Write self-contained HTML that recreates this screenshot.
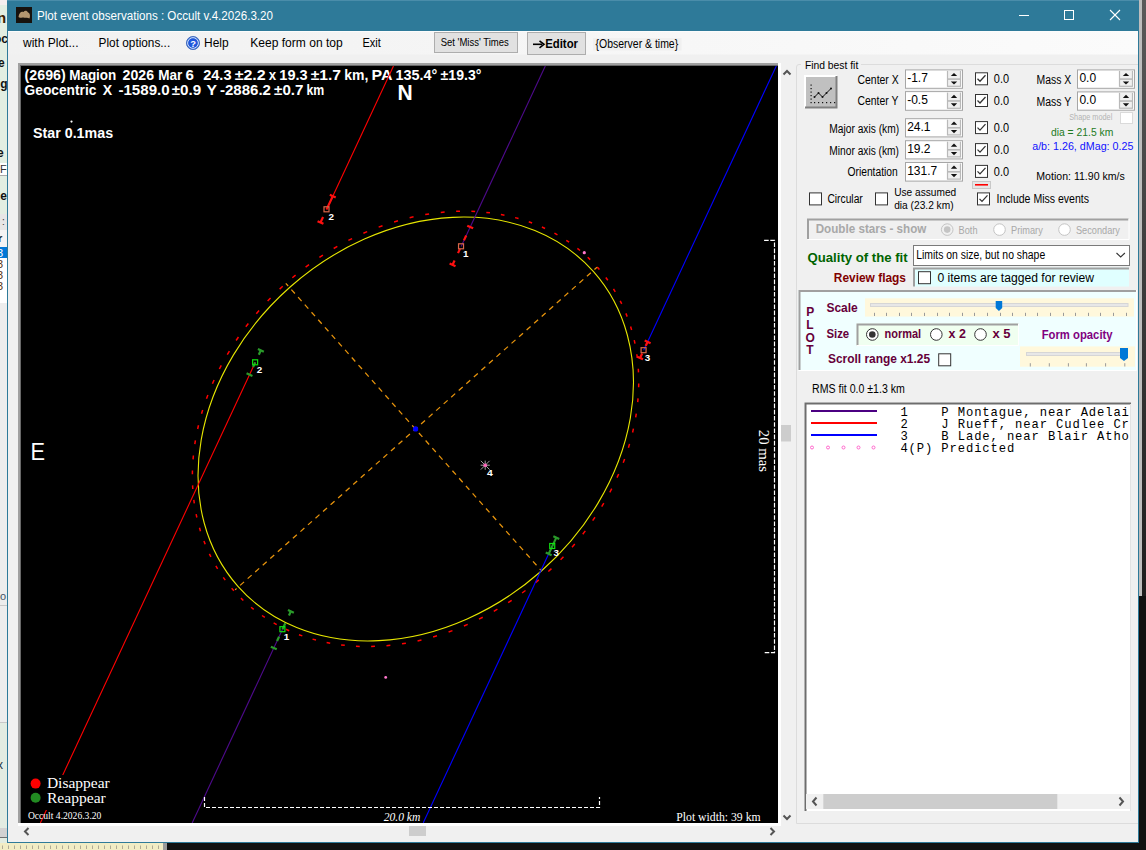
<!DOCTYPE html>
<html><head><meta charset="utf-8"><title>Plot event observations</title>
<style>html,body{margin:0;padding:0;width:1146px;height:850px;overflow:hidden;background:#111}svg{display:block}text{white-space:pre}</style></head>
<body><svg width="1146" height="850" viewBox="0 0 1146 850" font-family="Liberation Sans" xml:space="preserve">
<rect x="0" y="0" width="1146" height="850" fill="#111"/>
<defs><linearGradient id="rg" x1="0" y1="0" x2="0" y2="1"><stop offset="0" stop-color="#5a5a5a"/><stop offset="0.5" stop-color="#3a3a3a"/><stop offset="1" stop-color="#1e1e1e"/></linearGradient><linearGradient id="mg" x1="0" y1="0" x2="1" y2="0"><stop offset="0" stop-color="#f1f1f1"/><stop offset="1" stop-color="#fbfbfb"/></linearGradient><clipPath id="pc"><rect x="21" y="66" width="757" height="757"/></clipPath><clipPath id="lc"><rect x="806" y="404" width="324" height="390"/></clipPath></defs>
<rect x="1139" y="0" width="7" height="596" fill="url(#rg)"/>
<rect x="1139" y="0" width="3" height="596" fill="#bdbdbd"/>
<rect x="0" y="0" width="8" height="843" fill="#e2eee2"/>
<rect x="0" y="0" width="8" height="5" fill="#f4eeee"/>
<rect x="0" y="163" width="8" height="12" fill="#fff"/>
<line x1="0.00" y1="175.50" x2="8.00" y2="175.50" stroke="#aaa" stroke-width="1"/>
<rect x="0" y="214" width="8" height="16" fill="#e6e6e6"/>
<rect x="0" y="230" width="8" height="17" fill="#f4f4f4"/>
<rect x="0" y="247" width="8" height="11" fill="#0078d7"/>
<rect x="0" y="258" width="8" height="45" fill="#fff"/>
<rect x="0" y="303" width="8" height="540" fill="#ededed"/>
<line x1="0.00" y1="605.50" x2="8.00" y2="605.50" stroke="#c8c8c8" stroke-width="1"/>
<line x1="0.00" y1="722.50" x2="8.00" y2="722.50" stroke="#c8c8c8" stroke-width="1"/>
<rect x="0" y="723" width="8" height="120" fill="#e2ece2"/>
<rect x="0" y="828" width="8" height="9" fill="#d2d2d2"/>
<line x1="0.00" y1="837.50" x2="8.00" y2="837.50" stroke="#707070" stroke-width="1"/>
<clipPath id="lsc"><rect x="0" y="0" width="7" height="843"/></clipPath><g clip-path="url(#lsc)">
<text x="-3.0" y="23.0" font-size="15" fill="#3a2000" font-weight="bold" font-family="Liberation Sans" font-style="normal">n</text>
<text x="-6.0" y="43.0" font-size="12" fill="#111" font-weight="bold" font-family="Liberation Sans" font-style="normal">oc</text>
<text x="-2.0" y="67.0" font-size="12" fill="#111" font-weight="bold" font-family="Liberation Sans" font-style="normal">e</text>
<text x="-3.0" y="88.0" font-size="12" fill="#111" font-weight="bold" font-family="Liberation Sans" font-style="normal">ig</text>
<text x="-7.0" y="157.0" font-size="12" fill="#111" font-weight="bold" font-family="Liberation Sans" font-style="normal">te</text>
<text x="0.0" y="173.0" font-size="11" fill="#333" font-weight="normal" font-family="Liberation Sans" font-style="normal">Fl</text>
<text x="-7.0" y="200.0" font-size="12" fill="#111" font-weight="bold" font-family="Liberation Sans" font-style="normal">de</text>
<text x="2.0" y="225.0" font-size="10" fill="#333" font-weight="normal" font-family="Liberation Sans" font-style="normal">:</text>
<text x="-2.0" y="242.0" font-size="11" fill="#111" font-weight="bold" font-family="Liberation Sans" font-style="normal">r</text>
<text x="-3.0" y="257.0" font-size="11" fill="#fff" font-weight="normal" font-family="Liberation Sans" font-style="normal">3</text>
<text x="-3.0" y="268.0" font-size="11" fill="#553311" font-weight="normal" font-family="Liberation Sans" font-style="normal">3</text>
<text x="-3.0" y="279.0" font-size="11" fill="#553311" font-weight="normal" font-family="Liberation Sans" font-style="normal">3</text>
<text x="-3.0" y="290.0" font-size="11" fill="#553311" font-weight="normal" font-family="Liberation Sans" font-style="normal">3</text>
<text x="-6.0" y="600.0" font-size="11" fill="#445566" font-weight="normal" font-family="Liberation Sans" font-style="normal">oo</text>
<text x="-3.0" y="769.0" font-size="12" fill="#223344" font-weight="normal" font-family="Liberation Sans" font-style="normal">x</text>
</g>
<rect x="0" y="843" width="165" height="7" fill="#f1ecc4"/>
<rect x="163" y="843" width="4" height="7" fill="#9a9a9a"/>
<line x1="2.50" y1="845.50" x2="2.50" y2="849.00" stroke="#a8a390" stroke-width="0.9"/>
<line x1="8.50" y1="845.50" x2="8.50" y2="849.00" stroke="#a8a390" stroke-width="0.9"/>
<line x1="14.50" y1="845.50" x2="14.50" y2="849.00" stroke="#a8a390" stroke-width="0.9"/>
<line x1="20.50" y1="845.50" x2="20.50" y2="849.00" stroke="#a8a390" stroke-width="0.9"/>
<line x1="26.50" y1="845.50" x2="26.50" y2="849.00" stroke="#a8a390" stroke-width="0.9"/>
<line x1="32.50" y1="845.50" x2="32.50" y2="849.00" stroke="#a8a390" stroke-width="0.9"/>
<line x1="38.50" y1="845.50" x2="38.50" y2="849.00" stroke="#a8a390" stroke-width="0.9"/>
<line x1="44.50" y1="845.50" x2="44.50" y2="849.00" stroke="#a8a390" stroke-width="0.9"/>
<line x1="50.50" y1="845.50" x2="50.50" y2="849.00" stroke="#a8a390" stroke-width="0.9"/>
<line x1="56.50" y1="845.50" x2="56.50" y2="849.00" stroke="#a8a390" stroke-width="0.9"/>
<line x1="62.50" y1="845.50" x2="62.50" y2="849.00" stroke="#a8a390" stroke-width="0.9"/>
<line x1="68.50" y1="845.50" x2="68.50" y2="849.00" stroke="#a8a390" stroke-width="0.9"/>
<line x1="74.50" y1="845.50" x2="74.50" y2="849.00" stroke="#a8a390" stroke-width="0.9"/>
<line x1="80.50" y1="845.50" x2="80.50" y2="849.00" stroke="#a8a390" stroke-width="0.9"/>
<line x1="86.50" y1="845.50" x2="86.50" y2="849.00" stroke="#a8a390" stroke-width="0.9"/>
<line x1="92.50" y1="845.50" x2="92.50" y2="849.00" stroke="#a8a390" stroke-width="0.9"/>
<line x1="98.50" y1="845.50" x2="98.50" y2="849.00" stroke="#a8a390" stroke-width="0.9"/>
<line x1="104.50" y1="845.50" x2="104.50" y2="849.00" stroke="#a8a390" stroke-width="0.9"/>
<line x1="110.50" y1="845.50" x2="110.50" y2="849.00" stroke="#a8a390" stroke-width="0.9"/>
<line x1="116.50" y1="845.50" x2="116.50" y2="849.00" stroke="#a8a390" stroke-width="0.9"/>
<line x1="122.50" y1="845.50" x2="122.50" y2="849.00" stroke="#a8a390" stroke-width="0.9"/>
<line x1="128.50" y1="845.50" x2="128.50" y2="849.00" stroke="#a8a390" stroke-width="0.9"/>
<line x1="134.50" y1="845.50" x2="134.50" y2="849.00" stroke="#a8a390" stroke-width="0.9"/>
<line x1="140.50" y1="845.50" x2="140.50" y2="849.00" stroke="#a8a390" stroke-width="0.9"/>
<line x1="146.50" y1="845.50" x2="146.50" y2="849.00" stroke="#a8a390" stroke-width="0.9"/>
<line x1="152.50" y1="845.50" x2="152.50" y2="849.00" stroke="#a8a390" stroke-width="0.9"/>
<line x1="158.50" y1="845.50" x2="158.50" y2="849.00" stroke="#a8a390" stroke-width="0.9"/>
<rect x="7" y="0" width="1132" height="843" fill="#2e7a99"/>
<rect x="8" y="31" width="1130" height="811" fill="#f0f0f0"/>
<rect x="8" y="31" width="1130" height="23.5" fill="url(#mg)"/>
<rect x="8" y="31" width="1130" height="1" fill="#fcfcfc"/>
<rect x="7" y="0" width="1132" height="1" fill="#4a8daa"/>
<rect x="16" y="7" width="16" height="16" fill="#17120d"/>
<path d="M18.5 17 C19 13 21 11 23.5 12 C25 10 27 10.5 28 12.5 C30 13 30.5 16 29.5 18.5 C27 17 25.5 18.5 23.5 17.5 C21.5 17 20 18.5 18.5 17Z" fill="#b39670"/>
<text x="37.0" y="20.0" font-size="12" fill="#fff" font-weight="normal" font-family="Liberation Sans" font-style="normal" textLength="236.0" lengthAdjust="spacingAndGlyphs">Plot event observations : Occult v.4.2026.3.20</text>
<line x1="1019.00" y1="15.50" x2="1029.00" y2="15.50" stroke="#fff" stroke-width="1"/>
<rect x="1064.5" y="10.5" width="9" height="9" fill="none" stroke="#fff" stroke-width="1"/>
<line x1="1110.00" y1="10.00" x2="1120.00" y2="20.00" stroke="#fff" stroke-width="1.1"/>
<line x1="1120.00" y1="10.00" x2="1110.00" y2="20.00" stroke="#fff" stroke-width="1.1"/>
<text x="23.0" y="46.8" font-size="12" fill="#000" font-weight="normal" font-family="Liberation Sans" font-style="normal" textLength="55.5" lengthAdjust="spacingAndGlyphs">with Plot...</text>
<text x="98.6" y="46.8" font-size="12" fill="#000" font-weight="normal" font-family="Liberation Sans" font-style="normal" textLength="71.6" lengthAdjust="spacingAndGlyphs">Plot options...</text>
<circle cx="193" cy="43" r="6.6" fill="#3b6fd2" stroke="#3560b8" stroke-width="0.8"/><circle cx="193" cy="43" r="5.3" fill="none" stroke="#dbe8ff" stroke-width="1"/><circle cx="193" cy="43" r="4.6" fill="#1f56dc"/>
<text x="190.3" y="47.0" font-size="9.5" fill="#fff" font-weight="bold" font-family="Liberation Sans" font-style="normal" textLength="5.7" lengthAdjust="spacingAndGlyphs">?</text>
<text x="204.0" y="46.8" font-size="12" fill="#000" font-weight="normal" font-family="Liberation Sans" font-style="normal" textLength="24.6" lengthAdjust="spacingAndGlyphs">Help</text>
<text x="250.3" y="46.8" font-size="12" fill="#000" font-weight="normal" font-family="Liberation Sans" font-style="normal" textLength="92.4" lengthAdjust="spacingAndGlyphs">Keep form on top</text>
<text x="362.4" y="46.8" font-size="12" fill="#000" font-weight="normal" font-family="Liberation Sans" font-style="normal" textLength="18.4" lengthAdjust="spacingAndGlyphs">Exit</text>
<rect x="434.5" y="32.5" width="83" height="20" fill="#e1e1e1" stroke="#adadad" stroke-width="1"/>
<text x="440.7" y="46.3" font-size="10.3" fill="#000" font-weight="normal" font-family="Liberation Sans" font-style="normal" textLength="68.0" lengthAdjust="spacingAndGlyphs">Set 'Miss' Times</text>
<rect x="527.5" y="32.5" width="58" height="22" fill="#e1e1e1" stroke="#adadad" stroke-width="1"/>
<path d="M533 44.3 H542" stroke="#000" stroke-width="1.6"/><path d="M539.5 40.8 L544 44.3 L539.5 47.8" fill="none" stroke="#000" stroke-width="1.6"/>
<text x="545.2" y="48.1" font-size="12.5" fill="#000" font-weight="bold" font-family="Liberation Sans" font-style="normal" textLength="32.8" lengthAdjust="spacingAndGlyphs">Editor</text>
<rect x="593" y="38" width="88.6" height="12.5" fill="#f0f0f0"/>
<text x="595.6" y="48.1" font-size="12" fill="#000" font-weight="normal" font-family="Liberation Sans" font-style="normal" textLength="82.6" lengthAdjust="spacingAndGlyphs">{Observer &amp; time}</text>
<rect x="18" y="63" width="763" height="763" fill="#fff"/>
<rect x="18" y="63" width="760" height="2" fill="#a0a0a0"/>
<rect x="18" y="63" width="2" height="760" fill="#a0a0a0"/>
<rect x="20" y="65" width="758" height="1" fill="#696969"/>
<rect x="20" y="65" width="1" height="758" fill="#696969"/>
<rect x="21" y="66" width="757" height="757" fill="#000"/>
<rect x="781" y="63" width="15" height="763" fill="#f0f0f0"/>
<path d="M783.5 74.5 L787 71 L790.5 74.5" fill="none" stroke="#555" stroke-width="2"/>
<path d="M783.5 815.5 L787 819 L790.5 815.5" fill="none" stroke="#555" stroke-width="2"/>
<rect x="781" y="425" width="10" height="16.5" fill="#cdcdcd"/>
<path d="M28.5 828 L25 831.5 L28.5 835" fill="none" stroke="#555" stroke-width="2"/>
<path d="M770.5 828 L774 831.5 L770.5 835" fill="none" stroke="#555" stroke-width="2"/>
<rect x="409" y="826" width="17" height="10" fill="#cdcdcd"/>
<g clip-path="url(#pc)">
<text x="24.6" y="80.3" font-size="14" fill="#fff" font-weight="bold" font-family="Liberation Sans" font-style="normal" textLength="41.1" lengthAdjust="spacingAndGlyphs">(2696)</text>
<text x="69.2" y="80.3" font-size="14" fill="#fff" font-weight="bold" font-family="Liberation Sans" font-style="normal" textLength="47.1" lengthAdjust="spacingAndGlyphs">Magion</text>
<text x="122.6" y="80.3" font-size="14" fill="#fff" font-weight="bold" font-family="Liberation Sans" font-style="normal" textLength="31.4" lengthAdjust="spacingAndGlyphs">2026</text>
<text x="158.2" y="80.3" font-size="14" fill="#fff" font-weight="bold" font-family="Liberation Sans" font-style="normal" textLength="24.1" lengthAdjust="spacingAndGlyphs">Mar</text>
<text x="185.4" y="80.3" font-size="14" fill="#fff" font-weight="bold" font-family="Liberation Sans" font-style="normal" textLength="8.4" lengthAdjust="spacingAndGlyphs">6</text>
<text x="203.2" y="80.3" font-size="14" fill="#fff" font-weight="bold" font-family="Liberation Sans" font-style="normal" textLength="28.3" lengthAdjust="spacingAndGlyphs">24.3</text>
<text x="234.7" y="80.3" font-size="14" fill="#fff" font-weight="bold" font-family="Liberation Sans" font-style="normal" textLength="31.0" lengthAdjust="spacingAndGlyphs">±2.2</text>
<text x="268.8" y="80.3" font-size="14" fill="#fff" font-weight="bold" font-family="Liberation Sans" font-style="normal" textLength="7.4" lengthAdjust="spacingAndGlyphs">x</text>
<text x="279.3" y="80.3" font-size="14" fill="#fff" font-weight="bold" font-family="Liberation Sans" font-style="normal" textLength="28.3" lengthAdjust="spacingAndGlyphs">19.3</text>
<text x="310.7" y="80.3" font-size="14" fill="#fff" font-weight="bold" font-family="Liberation Sans" font-style="normal" textLength="30.4" lengthAdjust="spacingAndGlyphs">±1.7</text>
<text x="344.2" y="80.3" font-size="14" fill="#fff" font-weight="bold" font-family="Liberation Sans" font-style="normal" textLength="24.1" lengthAdjust="spacingAndGlyphs">km,</text>
<text x="371.5" y="80.3" font-size="14" fill="#fff" font-weight="bold" font-family="Liberation Sans" font-style="normal" textLength="20.9" lengthAdjust="spacingAndGlyphs">PA</text>
<text x="395.5" y="80.3" font-size="14" fill="#fff" font-weight="bold" font-family="Liberation Sans" font-style="normal" textLength="41.9" lengthAdjust="spacingAndGlyphs">135.4°</text>
<text x="440.6" y="80.3" font-size="14" fill="#fff" font-weight="bold" font-family="Liberation Sans" font-style="normal" textLength="40.8" lengthAdjust="spacingAndGlyphs">±19.3°</text>
<text x="24.6" y="95.4" font-size="14" fill="#fff" font-weight="bold" font-family="Liberation Sans" font-style="normal" textLength="71.8" lengthAdjust="spacingAndGlyphs">Geocentric</text>
<text x="102.7" y="95.4" font-size="14" fill="#fff" font-weight="bold" font-family="Liberation Sans" font-style="normal" textLength="9.4" lengthAdjust="spacingAndGlyphs">X</text>
<text x="118.4" y="95.4" font-size="14" fill="#fff" font-weight="bold" font-family="Liberation Sans" font-style="normal" textLength="51.3" lengthAdjust="spacingAndGlyphs">-1589.0</text>
<text x="171.8" y="95.4" font-size="14" fill="#fff" font-weight="bold" font-family="Liberation Sans" font-style="normal" textLength="29.4" lengthAdjust="spacingAndGlyphs">±0.9</text>
<text x="206.4" y="95.4" font-size="14" fill="#fff" font-weight="bold" font-family="Liberation Sans" font-style="normal" textLength="10.5" lengthAdjust="spacingAndGlyphs">Y</text>
<text x="220.0" y="95.4" font-size="14" fill="#fff" font-weight="bold" font-family="Liberation Sans" font-style="normal" textLength="50.9" lengthAdjust="spacingAndGlyphs">-2886.2</text>
<text x="274.1" y="95.4" font-size="14" fill="#fff" font-weight="bold" font-family="Liberation Sans" font-style="normal" textLength="29.3" lengthAdjust="spacingAndGlyphs">±0.7</text>
<text x="306.5" y="95.4" font-size="14" fill="#fff" font-weight="bold" font-family="Liberation Sans" font-style="normal" textLength="17.8" lengthAdjust="spacingAndGlyphs">km</text>
<text x="397.5" y="99.8" font-size="22" fill="#fff" font-weight="bold" font-family="Liberation Sans" font-style="normal" textLength="15.2" lengthAdjust="spacingAndGlyphs">N</text>
<text x="30.4" y="459.9" font-size="23" fill="#fff" font-weight="normal" font-family="Liberation Sans" font-style="normal" textLength="14.5" lengthAdjust="spacingAndGlyphs">E</text>
<text x="33.0" y="137.9" font-size="14" fill="#fff" font-weight="bold" font-family="Liberation Sans" font-style="normal" textLength="80.1" lengthAdjust="spacingAndGlyphs">Star 0.1mas</text>
<circle cx="71.5" cy="121.6" r="1.1" fill="#fff"/>
<path d="M233.89 590.71L231.66 588.15M225.29 580.17L223.28 577.41M217.62 568.88L215.85 565.95M210.91 556.92L209.38 553.83M205.19 544.33L203.92 541.09M200.50 531.18L199.49 527.81M196.86 517.53L196.12 514.05M194.29 503.45L193.81 499.87M192.79 489.00L192.59 485.34M192.38 474.27L192.44 470.54M193.05 459.31L193.39 455.54M194.81 444.20L195.42 440.41M197.65 429.02L198.52 425.22M201.54 413.83L202.68 410.05M206.48 398.72L207.88 394.97M212.44 383.76L214.08 380.05M219.39 369.02L221.27 365.38M227.29 354.57L229.41 351.01M236.11 340.48L238.45 337.02M245.80 326.82L248.36 323.48M256.32 313.66L259.08 310.45M267.62 301.06L270.56 298.00M279.64 289.08L282.75 286.19M292.32 277.78L295.58 275.07M305.60 267.22L309.00 264.70M319.41 257.45L322.94 255.13M333.69 248.51L337.33 246.41M348.38 240.45L352.10 238.57M363.39 233.31L367.18 231.67M378.65 227.12L382.50 225.72M394.10 221.91L397.98 220.77M409.64 217.71L413.54 216.82M425.22 214.54L429.11 213.91M440.75 212.42L444.62 212.05M456.16 211.35L459.98 211.25M471.37 211.34L475.13 211.50M486.31 212.39L489.99 212.81M500.90 214.49L504.48 215.18M515.08 217.64L518.55 218.59M528.77 221.81L532.11 223.02M541.91 227.00L545.10 228.45M554.43 233.17L557.46 234.86M566.28 240.29L569.13 242.22M577.39 248.33L580.05 250.48M587.72 257.25L590.17 259.62M597.21 267.01L599.44 269.57M605.81 277.55L607.82 280.31M613.48 288.84L615.25 291.77M620.19 300.80L621.72 303.89M625.91 313.39L627.18 316.63M630.60 326.54L631.61 329.91M634.24 340.19L634.98 343.67M636.81 354.27L637.29 357.85M638.31 368.72L638.51 372.38M638.72 383.45L638.66 387.18M638.05 398.41L637.71 402.18M636.29 413.52L635.68 417.31M633.45 428.70L632.58 432.50M629.56 443.89L628.42 447.67M624.62 459.00L623.22 462.75M618.66 473.96L617.02 477.67M611.71 488.70L609.83 492.34M603.81 503.15L601.69 506.71M594.99 517.24L592.65 520.70M585.30 530.90L582.74 534.24M574.78 544.06L572.02 547.27M563.48 556.66L560.54 559.72M551.46 568.64L548.35 571.53M538.78 579.94L535.52 582.65M525.50 590.50L522.10 593.02M511.69 600.27L508.16 602.59M497.41 609.21L493.77 611.31M482.72 617.27L479.00 619.15M467.71 624.41L463.92 626.05M452.45 630.60L448.60 632.00M437.00 635.81L433.12 636.95M421.46 640.01L417.56 640.90M405.88 643.18L401.99 643.81M390.35 645.30L386.48 645.67M374.94 646.37L371.12 646.47M359.73 646.38L355.97 646.22M344.79 645.33L341.11 644.91M330.20 643.23L326.62 642.54M316.02 640.08L312.55 639.13M302.33 635.91L298.99 634.70M289.19 630.72L286.00 629.27M276.67 624.55L273.64 622.86M264.82 617.43L261.97 615.50M253.71 609.39L251.05 607.24M243.38 600.47L240.93 598.10" fill="none" stroke="#ff0000" stroke-width="1.5"/>
<ellipse cx="415.75" cy="429.0" rx="237.4" ry="189.6" transform="rotate(-41.5 415.75 429.0)" fill="none" stroke="#e6e600" stroke-width="1.1"/>
<line x1="235.05" y1="589.90" x2="597.00" y2="267.20" stroke="#e8940c" stroke-width="1.25" stroke-dasharray="5.3 4.8" stroke-dashoffset="3.3"/>
<line x1="285.80" y1="283.30" x2="541.00" y2="570.30" stroke="#e8940c" stroke-width="1.25" stroke-dasharray="5.3 4.8" stroke-dashoffset="1.7"/>
<circle cx="415.6" cy="428.9" r="2.6" fill="#0000ff"/>
<circle cx="584.3" cy="252.7" r="1.6" fill="#ff77cc"/>
<circle cx="385.7" cy="677.4" r="1.4" fill="#ff77cc"/>
<line x1="480.60" y1="465.20" x2="489.80" y2="465.20" stroke="#a0a0a0" stroke-width="1"/>
<line x1="480.82" y1="460.82" x2="489.58" y2="469.58" stroke="#a0a0a0" stroke-width="1"/>
<line x1="485.20" y1="460.60" x2="485.20" y2="469.80" stroke="#a0a0a0" stroke-width="1"/>
<line x1="489.58" y1="460.82" x2="480.82" y2="469.58" stroke="#a0a0a0" stroke-width="1"/>
<circle cx="485.2" cy="465.2" r="1.8" fill="#ff66bb"/>
<line x1="545.30" y1="66.00" x2="461.14" y2="246.40" stroke="#4e0a8c" stroke-width="1.1"/>
<line x1="282.52" y1="629.30" x2="192.16" y2="823.00" stroke="#4e0a8c" stroke-width="1.1"/>
<line x1="393.50" y1="66.00" x2="326.60" y2="209.40" stroke="#ff0000" stroke-width="1.1"/>
<line x1="255.23" y1="362.40" x2="40.36" y2="823.00" stroke="#ff0000" stroke-width="1.1"/>
<line x1="776.30" y1="66.00" x2="643.67" y2="350.30" stroke="#0000ff" stroke-width="1.1"/>
<line x1="552.33" y1="546.10" x2="423.16" y2="823.00" stroke="#0000ff" stroke-width="1.1"/>
<line x1="467.25" y1="225.63" x2="473.14" y2="228.37" stroke="#ff1010" stroke-width="2.2"/>
<line x1="449.61" y1="263.43" x2="455.51" y2="266.17" stroke="#ff1010" stroke-width="2.2"/>
<line x1="466.23" y1="235.50" x2="463.94" y2="240.40" stroke="#ff1010" stroke-width="2.2"/>
<line x1="459.98" y1="248.90" x2="458.02" y2="253.10" stroke="#ff1010" stroke-width="2.2"/>
<line x1="454.57" y1="260.50" x2="452.56" y2="264.80" stroke="#ff1010" stroke-width="2.2"/>
<rect x="458.54" y="243.80" width="5" height="5" fill="none" stroke="#d9664a" stroke-width="1.2"/>
<line x1="287.97" y1="609.93" x2="293.86" y2="612.67" stroke="#2a9a2a" stroke-width="2.2"/>
<line x1="270.85" y1="646.63" x2="276.74" y2="649.37" stroke="#2a9a2a" stroke-width="2.2"/>
<line x1="290.92" y1="611.30" x2="288.96" y2="615.50" stroke="#2a9a2a" stroke-width="2.2"/>
<line x1="285.32" y1="623.30" x2="282.52" y2="629.30" stroke="#2a9a2a" stroke-width="2.2"/>
<line x1="279.07" y1="636.70" x2="277.06" y2="641.00" stroke="#2a9a2a" stroke-width="2.2"/>
<rect x="279.92" y="626.70" width="5" height="5" fill="none" stroke="#10e010" stroke-width="1.2"/>
<text x="463.1" y="257.0" font-size="9.2" fill="#fff" font-weight="bold" font-family="Liberation Sans" font-style="normal" textLength="5.5" lengthAdjust="spacingAndGlyphs">1</text>
<text x="283.8" y="639.9" font-size="9.2" fill="#fff" font-weight="bold" font-family="Liberation Sans" font-style="normal" textLength="5.5" lengthAdjust="spacingAndGlyphs">1</text>
<line x1="329.82" y1="194.83" x2="335.71" y2="197.57" stroke="#ff1010" stroke-width="2.2"/>
<line x1="317.55" y1="221.13" x2="323.44" y2="223.87" stroke="#ff1010" stroke-width="2.2"/>
<line x1="332.76" y1="196.20" x2="326.60" y2="209.40" stroke="#ff1010" stroke-width="2.2"/>
<line x1="323.06" y1="217.00" x2="320.49" y2="222.50" stroke="#ff1010" stroke-width="2.2"/>
<rect x="324.00" y="206.80" width="5" height="5" fill="none" stroke="#d9664a" stroke-width="1.2"/>
<line x1="257.93" y1="348.93" x2="263.82" y2="351.67" stroke="#2a9a2a" stroke-width="2.2"/>
<line x1="246.55" y1="373.33" x2="252.44" y2="376.07" stroke="#2a9a2a" stroke-width="2.2"/>
<line x1="260.87" y1="350.30" x2="258.82" y2="354.70" stroke="#2a9a2a" stroke-width="2.2"/>
<line x1="255.23" y1="362.40" x2="253.08" y2="367.00" stroke="#2a9a2a" stroke-width="2.2"/>
<rect x="252.63" y="359.80" width="5" height="5" fill="none" stroke="#10e010" stroke-width="1.2"/>
<text x="328.6" y="220.0" font-size="9.2" fill="#fff" font-weight="bold" font-family="Liberation Sans" font-style="normal" textLength="5.5" lengthAdjust="spacingAndGlyphs">2</text>
<text x="256.8" y="373.0" font-size="9.2" fill="#fff" font-weight="bold" font-family="Liberation Sans" font-style="normal" textLength="5.5" lengthAdjust="spacingAndGlyphs">2</text>
<line x1="644.69" y1="340.43" x2="650.58" y2="343.17" stroke="#ff1010" stroke-width="2.2"/>
<line x1="637.14" y1="356.63" x2="643.03" y2="359.37" stroke="#ff1010" stroke-width="2.2"/>
<line x1="647.64" y1="341.80" x2="645.68" y2="346.00" stroke="#ff1010" stroke-width="2.2"/>
<line x1="642.18" y1="353.50" x2="640.08" y2="358.00" stroke="#ff1010" stroke-width="2.2"/>
<rect x="641.07" y="347.70" width="5" height="5" fill="none" stroke="#d9664a" stroke-width="1.2"/>
<line x1="553.35" y1="536.23" x2="559.24" y2="538.97" stroke="#2a9a2a" stroke-width="2.2"/>
<line x1="545.75" y1="552.53" x2="551.64" y2="555.27" stroke="#2a9a2a" stroke-width="2.2"/>
<line x1="556.30" y1="537.60" x2="552.33" y2="546.10" stroke="#2a9a2a" stroke-width="2.2"/>
<line x1="552.33" y1="546.10" x2="548.69" y2="553.90" stroke="#2a9a2a" stroke-width="2.2"/>
<rect x="549.73" y="543.50" width="5" height="5" fill="none" stroke="#10e010" stroke-width="1.2"/>
<text x="644.8" y="360.6" font-size="9.2" fill="#fff" font-weight="bold" font-family="Liberation Sans" font-style="normal" textLength="5.5" lengthAdjust="spacingAndGlyphs">3</text>
<text x="553.4" y="556.0" font-size="9.2" fill="#fff" font-weight="bold" font-family="Liberation Sans" font-style="normal" textLength="5.5" lengthAdjust="spacingAndGlyphs">3</text>
<text x="487.1" y="475.7" font-size="9.2" fill="#fff" font-weight="bold" font-family="Liberation Sans" font-style="normal" textLength="5.8" lengthAdjust="spacingAndGlyphs">4</text>
<rect x="25" y="775" width="88" height="35" fill="#000"/>
<circle cx="35.6" cy="783.6" r="5" fill="#ff0000"/>
<circle cx="35.6" cy="797.8" r="5" fill="#228b22"/>
<text x="46.9" y="788.4" font-size="15.5" fill="#fff" font-weight="normal" font-family="Liberation Serif" font-style="normal" textLength="62.8" lengthAdjust="spacingAndGlyphs">Disappear</text>
<text x="46.9" y="802.6" font-size="15.5" fill="#fff" font-weight="normal" font-family="Liberation Serif" font-style="normal" textLength="58.9" lengthAdjust="spacingAndGlyphs">Reappear</text>
<text x="27.9" y="819.0" font-size="10.5" fill="#fff" font-weight="normal" font-family="Liberation Serif" font-style="normal" textLength="73.5" lengthAdjust="spacingAndGlyphs">Occult 4.2026.3.20</text>
<path d="M204.5 797 V807.5 H599.5 V797" fill="none" stroke="#fff" stroke-width="1.2" stroke-dasharray="4 2"/>
<rect x="382" y="808" width="41" height="15" fill="#000"/>
<text x="383.7" y="820.6" font-size="12" fill="#fff" font-weight="normal" font-family="Liberation Serif" font-style="italic" textLength="36.6" lengthAdjust="spacingAndGlyphs">20.0 km</text>
<text x="676.3" y="820.6" font-size="12" fill="#fff" font-weight="normal" font-family="Liberation Serif" font-style="normal" textLength="84.3" lengthAdjust="spacingAndGlyphs">Plot width: 39 km</text>
<path d="M764.1 240.4 H774.5 V652.6 H764.2" fill="none" stroke="#fff" stroke-width="1.2" stroke-dasharray="4.6 1.6"/>
<text x="0" y="0" font-size="14.8" fill="#fff" font-family="Liberation Serif" textLength="42.3" lengthAdjust="spacingAndGlyphs" transform="translate(759.2 429.8) rotate(90)">20 mas</text>
</g>
<path d="M1138 64.5 H799 Q796.5 64.5 796.5 67 V823.5 H1138" fill="none" stroke="#dcdcdc" stroke-width="1"/>
<rect x="801.00" y="58.00" width="60.00" height="10.00" fill="#f0f0f0"/>
<text x="804.9" y="68.8" font-size="11.5" fill="#000" font-weight="normal" font-family="Liberation Sans" font-style="normal" textLength="53.4" lengthAdjust="spacingAndGlyphs">Find best fit</text>
<rect x="805.00" y="76.00" width="32.00" height="32.00" fill="#c0c0c0"/>
<path d="M805 108 V76 H837" fill="none" stroke="#fff" stroke-width="2"/>
<path d="M805 107.5 H836.5 V76" fill="none" stroke="#808080" stroke-width="2"/>
<rect x="810.50" y="84.50" width="1.20" height="1.20" fill="#111"/>
<rect x="810.50" y="88.00" width="1.20" height="1.20" fill="#111"/>
<rect x="810.50" y="91.50" width="1.20" height="1.20" fill="#111"/>
<rect x="810.50" y="95.00" width="1.20" height="1.20" fill="#111"/>
<rect x="810.50" y="98.50" width="1.20" height="1.20" fill="#111"/>
<rect x="810.50" y="102.00" width="1.20" height="1.20" fill="#111"/>
<rect x="814.00" y="102.00" width="1.20" height="1.20" fill="#111"/>
<rect x="818.00" y="102.00" width="1.20" height="1.20" fill="#111"/>
<rect x="822.00" y="102.00" width="1.20" height="1.20" fill="#111"/>
<rect x="826.00" y="102.00" width="1.20" height="1.20" fill="#111"/>
<rect x="830.00" y="102.00" width="1.20" height="1.20" fill="#111"/>
<rect x="834.00" y="102.00" width="1.20" height="1.20" fill="#111"/>
<path d="M814.5 97 L818.5 93 L822.5 97 L826.5 93 L831 88.5" fill="none" stroke="#111" stroke-width="1"/>
<circle cx="814.5" cy="97" r="1" fill="#111"/>
<circle cx="818.5" cy="93" r="1" fill="#111"/>
<circle cx="822.5" cy="97" r="1" fill="#111"/>
<circle cx="826.5" cy="93" r="1" fill="#111"/>
<circle cx="831" cy="88.5" r="1" fill="#111"/>
<text x="857.5" y="83.7" font-size="12" fill="#000" font-weight="normal" font-family="Liberation Sans" font-style="normal" textLength="41.2" lengthAdjust="spacingAndGlyphs">Center X</text>
<rect x="905.50" y="69.90" width="57.00" height="18.40" fill="#fff" stroke="#a6a6a6" stroke-width="1"/>
<rect x="947.50" y="70.90" width="13.00" height="15.90" fill="#f0f0f0"/>
<line x1="947.50" y1="70.90" x2="947.50" y2="86.80" stroke="#b9b9b9" stroke-width="1.2"/>
<line x1="960.50" y1="70.90" x2="960.50" y2="86.80" stroke="#b9b9b9" stroke-width="1.2"/>
<line x1="947.50" y1="79.10" x2="960.50" y2="79.10" stroke="#b9b9b9" stroke-width="1.6"/>
<line x1="947.50" y1="86.30" x2="960.50" y2="86.30" stroke="#b9b9b9" stroke-width="1.2"/>
<path d="M950.80 76.10 L954.00 72.90 L957.20 76.10Z" fill="#111"/>
<path d="M950.80 81.40 L954.00 84.60 L957.20 81.40Z" fill="#111"/>
<text x="907.2" y="81.9" font-size="12" fill="#000" font-weight="normal" font-family="Liberation Sans" font-style="normal">-1.7</text>
<rect x="975.50" y="72.80" width="12.00" height="12.00" fill="#fff" stroke="#333" stroke-width="1"/>
<path d="M977.5 78.80000000000001 L980 81.30000000000001 L985.5 75.30000000000001" fill="none" stroke="#333" stroke-width="1.3"/>
<text x="993.8" y="83.2" font-size="12" fill="#000" font-weight="normal" font-family="Liberation Sans" font-style="normal" textLength="15.2" lengthAdjust="spacingAndGlyphs">0.0</text>
<text x="857.5" y="105.4" font-size="12" fill="#000" font-weight="normal" font-family="Liberation Sans" font-style="normal" textLength="40.9" lengthAdjust="spacingAndGlyphs">Center Y</text>
<rect x="905.50" y="91.60" width="57.00" height="18.70" fill="#fff" stroke="#a6a6a6" stroke-width="1"/>
<rect x="947.50" y="92.60" width="13.00" height="16.20" fill="#f0f0f0"/>
<line x1="947.50" y1="92.60" x2="947.50" y2="108.80" stroke="#b9b9b9" stroke-width="1.2"/>
<line x1="960.50" y1="92.60" x2="960.50" y2="108.80" stroke="#b9b9b9" stroke-width="1.2"/>
<line x1="947.50" y1="100.95" x2="960.50" y2="100.95" stroke="#b9b9b9" stroke-width="1.6"/>
<line x1="947.50" y1="108.30" x2="960.50" y2="108.30" stroke="#b9b9b9" stroke-width="1.2"/>
<path d="M950.80 97.95 L954.00 94.75 L957.20 97.95Z" fill="#111"/>
<path d="M950.80 103.25 L954.00 106.45 L957.20 103.25Z" fill="#111"/>
<text x="907.2" y="103.6" font-size="12" fill="#000" font-weight="normal" font-family="Liberation Sans" font-style="normal">-0.5</text>
<rect x="975.50" y="94.50" width="12.00" height="12.00" fill="#fff" stroke="#333" stroke-width="1"/>
<path d="M977.5 100.5 L980 103.0 L985.5 97.0" fill="none" stroke="#333" stroke-width="1.3"/>
<text x="993.8" y="104.9" font-size="12" fill="#000" font-weight="normal" font-family="Liberation Sans" font-style="normal" textLength="15.2" lengthAdjust="spacingAndGlyphs">0.0</text>
<text x="829.3" y="132.5" font-size="12" fill="#000" font-weight="normal" font-family="Liberation Sans" font-style="normal" textLength="69.8" lengthAdjust="spacingAndGlyphs">Major axis (km)</text>
<rect x="905.50" y="118.70" width="57.00" height="18.20" fill="#fff" stroke="#a6a6a6" stroke-width="1"/>
<rect x="947.50" y="119.70" width="13.00" height="15.70" fill="#f0f0f0"/>
<line x1="947.50" y1="119.70" x2="947.50" y2="135.40" stroke="#b9b9b9" stroke-width="1.2"/>
<line x1="960.50" y1="119.70" x2="960.50" y2="135.40" stroke="#b9b9b9" stroke-width="1.2"/>
<line x1="947.50" y1="127.80" x2="960.50" y2="127.80" stroke="#b9b9b9" stroke-width="1.6"/>
<line x1="947.50" y1="134.90" x2="960.50" y2="134.90" stroke="#b9b9b9" stroke-width="1.2"/>
<path d="M950.80 124.80 L954.00 121.60 L957.20 124.80Z" fill="#111"/>
<path d="M950.80 130.10 L954.00 133.30 L957.20 130.10Z" fill="#111"/>
<text x="907.2" y="130.7" font-size="12" fill="#000" font-weight="normal" font-family="Liberation Sans" font-style="normal">24.1</text>
<rect x="975.50" y="121.60" width="12.00" height="12.00" fill="#fff" stroke="#333" stroke-width="1"/>
<path d="M977.5 127.60000000000001 L980 130.10000000000002 L985.5 124.10000000000001" fill="none" stroke="#333" stroke-width="1.3"/>
<text x="993.8" y="132.0" font-size="12" fill="#000" font-weight="normal" font-family="Liberation Sans" font-style="normal" textLength="15.2" lengthAdjust="spacingAndGlyphs">0.0</text>
<text x="829.3" y="154.5" font-size="12" fill="#000" font-weight="normal" font-family="Liberation Sans" font-style="normal" textLength="69.7" lengthAdjust="spacingAndGlyphs">Minor axis (km)</text>
<rect x="905.50" y="140.70" width="57.00" height="18.20" fill="#fff" stroke="#a6a6a6" stroke-width="1"/>
<rect x="947.50" y="141.70" width="13.00" height="15.70" fill="#f0f0f0"/>
<line x1="947.50" y1="141.70" x2="947.50" y2="157.40" stroke="#b9b9b9" stroke-width="1.2"/>
<line x1="960.50" y1="141.70" x2="960.50" y2="157.40" stroke="#b9b9b9" stroke-width="1.2"/>
<line x1="947.50" y1="149.80" x2="960.50" y2="149.80" stroke="#b9b9b9" stroke-width="1.6"/>
<line x1="947.50" y1="156.90" x2="960.50" y2="156.90" stroke="#b9b9b9" stroke-width="1.2"/>
<path d="M950.80 146.80 L954.00 143.60 L957.20 146.80Z" fill="#111"/>
<path d="M950.80 152.10 L954.00 155.30 L957.20 152.10Z" fill="#111"/>
<text x="907.2" y="152.7" font-size="12" fill="#000" font-weight="normal" font-family="Liberation Sans" font-style="normal">19.2</text>
<rect x="975.50" y="143.60" width="12.00" height="12.00" fill="#fff" stroke="#333" stroke-width="1"/>
<path d="M977.5 149.6 L980 152.1 L985.5 146.1" fill="none" stroke="#333" stroke-width="1.3"/>
<text x="993.8" y="154.0" font-size="12" fill="#000" font-weight="normal" font-family="Liberation Sans" font-style="normal" textLength="15.2" lengthAdjust="spacingAndGlyphs">0.0</text>
<text x="847.5" y="176.3" font-size="12" fill="#000" font-weight="normal" font-family="Liberation Sans" font-style="normal" textLength="50.2" lengthAdjust="spacingAndGlyphs">Orientation</text>
<rect x="905.50" y="162.50" width="57.00" height="18.60" fill="#fff" stroke="#a6a6a6" stroke-width="1"/>
<rect x="947.50" y="163.50" width="13.00" height="16.10" fill="#f0f0f0"/>
<line x1="947.50" y1="163.50" x2="947.50" y2="179.60" stroke="#b9b9b9" stroke-width="1.2"/>
<line x1="960.50" y1="163.50" x2="960.50" y2="179.60" stroke="#b9b9b9" stroke-width="1.2"/>
<line x1="947.50" y1="171.80" x2="960.50" y2="171.80" stroke="#b9b9b9" stroke-width="1.6"/>
<line x1="947.50" y1="179.10" x2="960.50" y2="179.10" stroke="#b9b9b9" stroke-width="1.2"/>
<path d="M950.80 168.80 L954.00 165.60 L957.20 168.80Z" fill="#111"/>
<path d="M950.80 174.10 L954.00 177.30 L957.20 174.10Z" fill="#111"/>
<text x="907.2" y="174.5" font-size="12" fill="#000" font-weight="normal" font-family="Liberation Sans" font-style="normal">131.7</text>
<rect x="975.50" y="165.40" width="12.00" height="12.00" fill="#fff" stroke="#333" stroke-width="1"/>
<path d="M977.5 171.4 L980 173.9 L985.5 167.9" fill="none" stroke="#333" stroke-width="1.3"/>
<text x="993.8" y="175.8" font-size="12" fill="#000" font-weight="normal" font-family="Liberation Sans" font-style="normal" textLength="15.2" lengthAdjust="spacingAndGlyphs">0.0</text>
<text x="1036.5" y="84.0" font-size="12" fill="#000" font-weight="normal" font-family="Liberation Sans" font-style="normal" textLength="34.7" lengthAdjust="spacingAndGlyphs">Mass X</text>
<rect x="1077.50" y="69.90" width="57.00" height="18.40" fill="#fff" stroke="#a6a6a6" stroke-width="1"/>
<rect x="1119.50" y="70.90" width="13.00" height="15.90" fill="#f0f0f0"/>
<line x1="1119.50" y1="70.90" x2="1119.50" y2="86.80" stroke="#b9b9b9" stroke-width="1.2"/>
<line x1="1132.50" y1="70.90" x2="1132.50" y2="86.80" stroke="#b9b9b9" stroke-width="1.2"/>
<line x1="1119.50" y1="79.10" x2="1132.50" y2="79.10" stroke="#b9b9b9" stroke-width="1.6"/>
<line x1="1119.50" y1="86.30" x2="1132.50" y2="86.30" stroke="#b9b9b9" stroke-width="1.2"/>
<path d="M1122.80 76.10 L1126.00 72.90 L1129.20 76.10Z" fill="#111"/>
<path d="M1122.80 81.40 L1126.00 84.60 L1129.20 81.40Z" fill="#111"/>
<text x="1079.4" y="81.9" font-size="12" fill="#000" font-weight="normal" font-family="Liberation Sans" font-style="normal">0.0</text>
<text x="1036.5" y="106.0" font-size="12" fill="#000" font-weight="normal" font-family="Liberation Sans" font-style="normal" textLength="34.7" lengthAdjust="spacingAndGlyphs">Mass Y</text>
<rect x="1077.50" y="91.90" width="57.00" height="18.30" fill="#fff" stroke="#a6a6a6" stroke-width="1"/>
<rect x="1119.50" y="92.90" width="13.00" height="15.80" fill="#f0f0f0"/>
<line x1="1119.50" y1="92.90" x2="1119.50" y2="108.70" stroke="#b9b9b9" stroke-width="1.2"/>
<line x1="1132.50" y1="92.90" x2="1132.50" y2="108.70" stroke="#b9b9b9" stroke-width="1.2"/>
<line x1="1119.50" y1="101.05" x2="1132.50" y2="101.05" stroke="#b9b9b9" stroke-width="1.6"/>
<line x1="1119.50" y1="108.20" x2="1132.50" y2="108.20" stroke="#b9b9b9" stroke-width="1.2"/>
<path d="M1122.80 98.05 L1126.00 94.85 L1129.20 98.05Z" fill="#111"/>
<path d="M1122.80 103.35 L1126.00 106.55 L1129.20 103.35Z" fill="#111"/>
<text x="1079.4" y="103.9" font-size="12" fill="#000" font-weight="normal" font-family="Liberation Sans" font-style="normal">0.0</text>
<text x="1069.2" y="119.5" font-size="8.5" fill="#b4b4b4" font-weight="normal" font-family="Liberation Sans" font-style="normal" textLength="43.1" lengthAdjust="spacingAndGlyphs">Shape model</text>
<rect x="1120.50" y="112.50" width="12.00" height="11.00" fill="#fff" stroke="#dadada" stroke-width="1"/>
<text x="1050.9" y="135.6" font-size="11.5" fill="#1e7b1e" font-weight="normal" font-family="Liberation Sans" font-style="normal" textLength="62.5" lengthAdjust="spacingAndGlyphs">dia = 21.5 km</text>
<text x="1032.2" y="149.8" font-size="11.5" fill="#1010ff" font-weight="normal" font-family="Liberation Sans" font-style="normal" textLength="101.2" lengthAdjust="spacingAndGlyphs">a/b: 1.26, dMag: 0.25</text>
<text x="1036.3" y="179.5" font-size="11.5" fill="#000" font-weight="normal" font-family="Liberation Sans" font-style="normal" textLength="88.5" lengthAdjust="spacingAndGlyphs">Motion: 11.90 km/s</text>
<rect x="972.50" y="181.50" width="18.00" height="7.00" fill="#e6e6e6" stroke="#c8c8c8" stroke-width="1"/>
<line x1="975.00" y1="184.80" x2="988.00" y2="184.80" stroke="#ff0000" stroke-width="1.6"/>
<rect x="809.50" y="192.90" width="12.00" height="12.00" fill="#fff" stroke="#333" stroke-width="1"/>
<text x="827.4" y="202.5" font-size="12" fill="#000" font-weight="normal" font-family="Liberation Sans" font-style="normal" textLength="35.4" lengthAdjust="spacingAndGlyphs">Circular</text>
<rect x="875.50" y="192.90" width="12.00" height="12.00" fill="#fff" stroke="#333" stroke-width="1"/>
<text x="894.2" y="196.0" font-size="11" fill="#000" font-weight="normal" font-family="Liberation Sans" font-style="normal" textLength="62.0" lengthAdjust="spacingAndGlyphs">Use assumed</text>
<text x="894.2" y="208.6" font-size="11" fill="#000" font-weight="normal" font-family="Liberation Sans" font-style="normal" textLength="59.4" lengthAdjust="spacingAndGlyphs">dia (23.2 km)</text>
<rect x="977.50" y="192.90" width="12.00" height="12.00" fill="#fff" stroke="#333" stroke-width="1"/>
<path d="M979.5 198.9 L982 201.4 L987.5 195.4" fill="none" stroke="#333" stroke-width="1.3"/>
<text x="996.5" y="202.5" font-size="12" fill="#000" font-weight="normal" font-family="Liberation Sans" font-style="normal" textLength="92.5" lengthAdjust="spacingAndGlyphs">Include Miss events</text>
<rect x="807.00" y="218.50" width="322.00" height="21.00" fill="#f0f0f0"/>
<path d="M808 239 V219.5 H1128.5" fill="none" stroke="#a0a0a0" stroke-width="2"/>
<path d="M807.5 239.5 H1129 V219" fill="none" stroke="#fff" stroke-width="1"/>
<text x="815.7" y="232.8" font-size="12.5" fill="#a8a8a8" font-weight="bold" font-family="Liberation Sans" font-style="normal" textLength="110.7" lengthAdjust="spacingAndGlyphs">Double stars - show</text>
<circle cx="947.2" cy="229.6" r="5.8" fill="#f0f0f0" stroke="#c4c4c4" stroke-width="1"/>
<circle cx="947.2" cy="229.6" r="3.3" fill="#c4c4c4"/>
<text x="958.6" y="233.5" font-size="10.5" fill="#a8a8a8" font-weight="normal" font-family="Liberation Sans" font-style="normal" textLength="18.9" lengthAdjust="spacingAndGlyphs">Both</text>
<circle cx="999.5" cy="229.6" r="5.8" fill="#fff" stroke="#c4c4c4" stroke-width="1"/>
<text x="1011.1" y="234.0" font-size="10.5" fill="#a8a8a8" font-weight="normal" font-family="Liberation Sans" font-style="normal" textLength="31.7" lengthAdjust="spacingAndGlyphs">Primary</text>
<circle cx="1064.5" cy="229.6" r="5.8" fill="#fff" stroke="#c4c4c4" stroke-width="1"/>
<text x="1076.0" y="234.0" font-size="10.5" fill="#a8a8a8" font-weight="normal" font-family="Liberation Sans" font-style="normal" textLength="43.9" lengthAdjust="spacingAndGlyphs">Secondary</text>
<text x="807.5" y="261.5" font-size="12.5" fill="#006400" font-weight="bold" font-family="Liberation Sans" font-style="normal" textLength="100.1" lengthAdjust="spacingAndGlyphs">Quality of the fit</text>
<rect x="913.50" y="245.50" width="216.00" height="20.00" fill="#fff" stroke="#7a7a7a" stroke-width="1"/>
<text x="916.2" y="259.2" font-size="12" fill="#000" font-weight="normal" font-family="Liberation Sans" font-style="normal" textLength="129.0" lengthAdjust="spacingAndGlyphs">Limits on size, but no shape</text>
<path d="M1116.5 253 L1120.7 257 L1124.9 253" fill="none" stroke="#333" stroke-width="1.1"/>
<text x="833.8" y="281.5" font-size="12.5" fill="#800000" font-weight="bold" font-family="Liberation Sans" font-style="normal" textLength="72.2" lengthAdjust="spacingAndGlyphs">Review flags</text>
<rect x="913.00" y="267.50" width="216.00" height="19.00" fill="#e0ffff"/>
<path d="M914 286.5 V268.5 H1129" fill="none" stroke="#a0a0a0" stroke-width="2"/>
<rect x="918.50" y="271.70" width="12.00" height="12.00" fill="#fff" stroke="#333" stroke-width="1"/>
<text x="937.4" y="282.0" font-size="12" fill="#000" font-weight="normal" font-family="Liberation Sans" font-style="normal" textLength="156.6" lengthAdjust="spacingAndGlyphs">0 items are tagged for review</text>
<rect x="798.50" y="290.00" width="338.00" height="80.50" fill="#f0ffff"/>
<path d="M799.5 370 V291 H1136.5" fill="none" stroke="#a0a0a0" stroke-width="2"/>
<path d="M798.5 370.5 H1136.5 V290" fill="none" stroke="#fff" stroke-width="1"/>
<text x="806.3" y="315.6" font-size="12" fill="#66003a" font-weight="bold" font-family="Liberation Sans" font-style="normal">P</text>
<text x="806.3" y="329.0" font-size="12" fill="#66003a" font-weight="bold" font-family="Liberation Sans" font-style="normal">L</text>
<text x="805.5" y="341.5" font-size="12" fill="#66003a" font-weight="bold" font-family="Liberation Sans" font-style="normal">O</text>
<text x="806.3" y="354.1" font-size="12" fill="#66003a" font-weight="bold" font-family="Liberation Sans" font-style="normal">T</text>
<text x="826.4" y="311.7" font-size="12.5" fill="#66003a" font-weight="bold" font-family="Liberation Sans" font-style="normal" textLength="31.4" lengthAdjust="spacingAndGlyphs">Scale</text>
<rect x="865.00" y="298.30" width="269.00" height="18.30" fill="#fff8dc"/>
<rect x="870.50" y="303.50" width="257.50" height="3.00" fill="#e7e7e7" stroke="#d6d6d6" stroke-width="1"/>
<path d="M995.7 301 H1002.2 V308 L998.95 311 L995.7 308Z" fill="#0078d7"/>
<line x1="874.50" y1="312.80" x2="874.50" y2="316.00" stroke="#9a9a9a" stroke-width="1"/>
<line x1="886.50" y1="312.80" x2="886.50" y2="316.00" stroke="#9a9a9a" stroke-width="1"/>
<line x1="899.50" y1="312.80" x2="899.50" y2="316.00" stroke="#9a9a9a" stroke-width="1"/>
<line x1="911.50" y1="312.80" x2="911.50" y2="316.00" stroke="#9a9a9a" stroke-width="1"/>
<line x1="924.50" y1="312.80" x2="924.50" y2="316.00" stroke="#9a9a9a" stroke-width="1"/>
<line x1="937.50" y1="312.80" x2="937.50" y2="316.00" stroke="#9a9a9a" stroke-width="1"/>
<line x1="949.50" y1="312.80" x2="949.50" y2="316.00" stroke="#9a9a9a" stroke-width="1"/>
<line x1="962.50" y1="312.80" x2="962.50" y2="316.00" stroke="#9a9a9a" stroke-width="1"/>
<line x1="974.50" y1="312.80" x2="974.50" y2="316.00" stroke="#9a9a9a" stroke-width="1"/>
<line x1="987.50" y1="312.80" x2="987.50" y2="316.00" stroke="#9a9a9a" stroke-width="1"/>
<line x1="1000.50" y1="312.80" x2="1000.50" y2="316.00" stroke="#9a9a9a" stroke-width="1"/>
<line x1="1012.50" y1="312.80" x2="1012.50" y2="316.00" stroke="#9a9a9a" stroke-width="1"/>
<line x1="1025.50" y1="312.80" x2="1025.50" y2="316.00" stroke="#9a9a9a" stroke-width="1"/>
<line x1="1037.50" y1="312.80" x2="1037.50" y2="316.00" stroke="#9a9a9a" stroke-width="1"/>
<line x1="1050.50" y1="312.80" x2="1050.50" y2="316.00" stroke="#9a9a9a" stroke-width="1"/>
<line x1="1063.50" y1="312.80" x2="1063.50" y2="316.00" stroke="#9a9a9a" stroke-width="1"/>
<line x1="1075.50" y1="312.80" x2="1075.50" y2="316.00" stroke="#9a9a9a" stroke-width="1"/>
<line x1="1088.50" y1="312.80" x2="1088.50" y2="316.00" stroke="#9a9a9a" stroke-width="1"/>
<line x1="1100.50" y1="312.80" x2="1100.50" y2="316.00" stroke="#9a9a9a" stroke-width="1"/>
<line x1="1113.50" y1="312.80" x2="1113.50" y2="316.00" stroke="#9a9a9a" stroke-width="1"/>
<line x1="1126.50" y1="312.80" x2="1126.50" y2="316.00" stroke="#9a9a9a" stroke-width="1"/>
<text x="826.4" y="337.6" font-size="12.5" fill="#66003a" font-weight="bold" font-family="Liberation Sans" font-style="normal" textLength="22.8" lengthAdjust="spacingAndGlyphs">Size</text>
<rect x="856.50" y="323.50" width="162.00" height="22.00" fill="#f0fff0"/>
<path d="M857.5 345.5 V324.5 H1018.5" fill="none" stroke="#a0a0a0" stroke-width="2"/>
<path d="M856.5 345.5 H1018.5 V323.5" fill="none" stroke="#fff" stroke-width="1"/>
<circle cx="872.3" cy="334.5" r="5.8" fill="#fff" stroke="#333" stroke-width="1"/>
<circle cx="872.3" cy="334.5" r="3.3" fill="#333"/>
<text x="884.5" y="338.4" font-size="12.5" fill="#66003a" font-weight="bold" font-family="Liberation Sans" font-style="normal" textLength="36.6" lengthAdjust="spacingAndGlyphs">normal</text>
<circle cx="936.3" cy="334.5" r="5.8" fill="#fff" stroke="#333" stroke-width="1"/>
<text x="948.6" y="338.4" font-size="12.5" fill="#66003a" font-weight="bold" font-family="Liberation Sans" font-style="normal" textLength="17.3" lengthAdjust="spacingAndGlyphs">x 2</text>
<circle cx="980.5" cy="334.5" r="5.8" fill="#fff" stroke="#333" stroke-width="1"/>
<text x="992.5" y="338.4" font-size="12.5" fill="#66003a" font-weight="bold" font-family="Liberation Sans" font-style="normal" textLength="18.1" lengthAdjust="spacingAndGlyphs">x 5</text>
<text x="1041.7" y="338.6" font-size="12.5" fill="#800080" font-weight="bold" font-family="Liberation Sans" font-style="normal" textLength="70.9" lengthAdjust="spacingAndGlyphs">Form opacity</text>
<text x="828.0" y="363.0" font-size="12.5" fill="#66003a" font-weight="bold" font-family="Liberation Sans" font-style="normal" textLength="102.1" lengthAdjust="spacingAndGlyphs">Scroll range x1.25</text>
<rect x="938.70" y="353.80" width="12.00" height="12.00" fill="#fff" stroke="#333" stroke-width="1"/>
<rect x="1020.00" y="346.40" width="115.00" height="20.30" fill="#fff8dc"/>
<rect x="1026.50" y="352.50" width="100.50" height="3.00" fill="#e7e7e7" stroke="#d6d6d6" stroke-width="1"/>
<path d="M1120 348 H1128 V358 L1124 361 L1120 358Z" fill="#0078d7"/>
<line x1="1030.30" y1="363.20" x2="1030.30" y2="366.50" stroke="#9a9a9a" stroke-width="1"/>
<line x1="1049.30" y1="363.20" x2="1049.30" y2="366.50" stroke="#9a9a9a" stroke-width="1"/>
<line x1="1068.40" y1="363.20" x2="1068.40" y2="366.50" stroke="#9a9a9a" stroke-width="1"/>
<line x1="1086.40" y1="363.20" x2="1086.40" y2="366.50" stroke="#9a9a9a" stroke-width="1"/>
<line x1="1105.60" y1="363.20" x2="1105.60" y2="366.50" stroke="#9a9a9a" stroke-width="1"/>
<line x1="1124.80" y1="363.20" x2="1124.80" y2="366.50" stroke="#9a9a9a" stroke-width="1"/>
<text x="812.0" y="393.0" font-size="12" fill="#000" font-weight="normal" font-family="Liberation Sans" font-style="normal" textLength="92.9" lengthAdjust="spacingAndGlyphs">RMS fit 0.0 ±1.3 km</text>
<rect x="804.50" y="402.50" width="326.50" height="408.50" fill="#fff"/>
<path d="M805.5 811 V403.5 H1131" fill="none" stroke="#6d6d6d" stroke-width="2"/>
<line x1="1130.50" y1="404.00" x2="1130.50" y2="811.00" stroke="#e3e3e3" stroke-width="1"/>
<g clip-path="url(#lc)">
<line x1="811.00" y1="411.00" x2="877.00" y2="411.00" stroke="#4b0082" stroke-width="2"/>
<line x1="811.00" y1="423.00" x2="877.00" y2="423.00" stroke="#ff0000" stroke-width="2"/>
<line x1="811.00" y1="435.00" x2="877.00" y2="435.00" stroke="#0000ff" stroke-width="2"/>
<circle cx="812" cy="447.5" r="1.5" fill="none" stroke="#ff66cc" stroke-width="1"/>
<circle cx="828" cy="447.5" r="1.5" fill="none" stroke="#ff66cc" stroke-width="1"/>
<circle cx="843.5" cy="447.5" r="1.5" fill="none" stroke="#ff66cc" stroke-width="1"/>
<circle cx="858.5" cy="447.5" r="1.5" fill="none" stroke="#ff66cc" stroke-width="1"/>
<circle cx="873.5" cy="447.5" r="1.5" fill="none" stroke="#ff66cc" stroke-width="1"/>
<text x="900.4" y="416.0" font-size="12.2" letter-spacing="0.88" font-family="Liberation Mono" fill="#000">1    P Montague, near Adelaide</text>
<text x="900.4" y="428.1" font-size="12.2" letter-spacing="0.88" font-family="Liberation Mono" fill="#000">2    J Rueff, near Cudlee Creek</text>
<text x="900.4" y="440.2" font-size="12.2" letter-spacing="0.88" font-family="Liberation Mono" fill="#000">3    B Lade, near Blair Athol</text>
<text x="900.4" y="452.3" font-size="12.2" letter-spacing="0.88" font-family="Liberation Mono" fill="#000">4(P) Predicted</text>
</g>
<rect x="806.00" y="794.00" width="324.00" height="15.00" fill="#f0f0f0"/>
<rect x="823.30" y="794.00" width="234.00" height="15.00" fill="#cdcdcd"/>
<path d="M816.5 797.5 L813 801.5 L816.5 805.5" fill="none" stroke="#555" stroke-width="2"/>
<path d="M1119.5 797.5 L1123 801.5 L1119.5 805.5" fill="none" stroke="#555" stroke-width="2"/>
</svg></body></html>
